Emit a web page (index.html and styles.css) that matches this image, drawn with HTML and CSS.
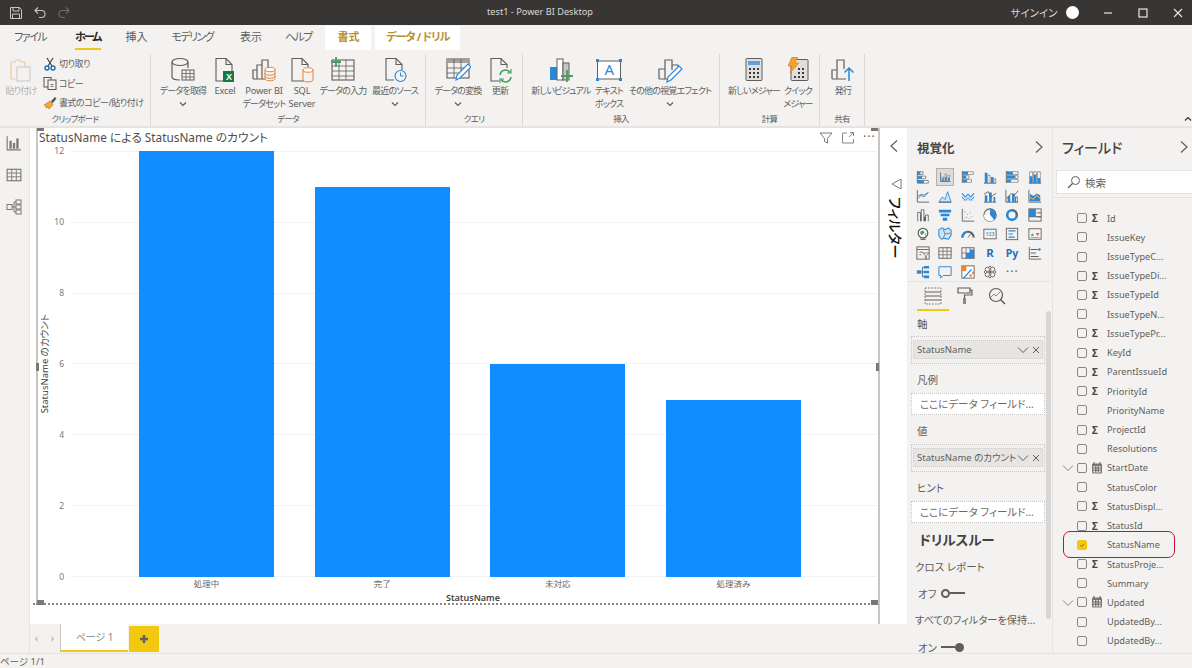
FILE: index.html
```html
<!DOCTYPE html>
<html lang="ja">
<head>
<meta charset="utf-8">
<title>test1 - Power BI Desktop</title>
<link rel="stylesheet" href="styles.css">
</head>
<body>
<svg class="defs" width="0" height="0" aria-hidden="true">
  <symbol id="chev-r" viewBox="0 0 10 14"><path d="M2 1.5 8 7l-6 5.5" fill="none" stroke="currentColor" stroke-width="1.2"/></symbol>
  <symbol id="chev-l" viewBox="0 0 10 14"><path d="M8 1.5 2 7l6 5.5" fill="none" stroke="currentColor" stroke-width="1.2"/></symbol>
  <symbol id="chev-d" viewBox="0 0 8 6"><path d="M1 1.5 4 4.5l3-3" fill="none" stroke="currentColor" stroke-width="1.2"/></symbol>
  <symbol id="chev-dl" viewBox="0 0 12 8"><path d="M1 1.5 6 6.5l5-5" fill="none" stroke="currentColor" stroke-width="1"/></symbol>
  <symbol id="x-mark" viewBox="0 0 8 8"><path d="M1 1 7 7M7 1 1 7" fill="none" stroke="currentColor" stroke-width="1"/></symbol>
  <symbol id="cal" viewBox="0 0 12 12"><rect x="1" y="1.5" width="10" height="10" rx="1" fill="#7a7876"/><rect x="2.5" y="4" width="7" height="6.5" fill="#f3f2f1"/><path d="M3 0v3M9 0v3M2.5 6h7M2.5 8.2h7M4.8 4v6.5M7.2 4v6.5" stroke="#605e5c" stroke-width="1"/></symbol>
</svg>
<div class="app">

<header class="titlebar">
  <div class="qat">
    <svg class="ti" viewBox="0 0 14 14"><path d="M1.5 1.5h9l2 2v9h-11z" fill="none" stroke="#c8c6c4"/><path d="M4 1.5v3.5h6V1.5M3.5 12.5V8h7v4.5" fill="none" stroke="#c8c6c4"/></svg>
    <svg class="ti" viewBox="0 0 14 14"><path d="M5 1.5 2 4.5l3 3M2.5 4.5h6a3.5 3.5 0 0 1 0 7H6" fill="none" stroke="#c8c6c4" stroke-width="1.1"/></svg>
    <svg class="ti" viewBox="0 0 14 14"><path d="M9 1.5l3 3-3 3M11.5 4.5h-6a3.5 3.5 0 0 0 0 7H8" fill="none" stroke="#6d6b69" stroke-width="1.1"/></svg>
  </div>
  <div class="doc-title">test1 - Power BI Desktop</div>
  <div class="win">
    <span class="signin">サインイン</span>
    <span class="avatar"></span>
    <svg class="wc wc-min" viewBox="0 0 10 10"><path d="M1 5h8" stroke="#e6e6e6" stroke-width="1.2"/></svg>
    <svg class="wc" viewBox="0 0 10 10"><rect x="1" y="1" width="8" height="8" fill="none" stroke="#e6e6e6" stroke-width="1.2"/></svg>
    <svg class="wc" viewBox="0 0 10 10"><path d="M1 1l8 8M9 1 1 9" stroke="#e6e6e6" stroke-width="1.1"/></svg>
  </div>
</header>

<nav class="tabs">
  <span class="tab t-file">ファイル</span>
  <span class="tab t-home">ホーム</span>
  <span class="tab t-ins">挿入</span>
  <span class="tab t-model">モデリング</span>
  <span class="tab t-view">表示</span>
  <span class="tab t-help">ヘルプ</span>
  <span class="tab ctx t-fmt">書式</span>
  <span class="tab ctx t-drill">データ / ドリル</span>
</nav>

<section class="ribbon">
  <div class="group g-clip">
    <div class="btns">
      <div class="btn w-paste disabled">
        <svg class="ri" viewBox="0 0 26 26"><path d="M3 5h4l1-2h4l1 2h4v5" fill="none" stroke="#f0c9a0" stroke-width="1.2"/><path d="M3 5v17h5" fill="none" stroke="#f0c9a0" stroke-width="1.2"/><rect x="9" y="10" width="13" height="14" fill="#f3f2f1" stroke="#c8c6c4"/></svg>
        <span class="lbl">貼り付け</span>
      </div>
      <div class="small">
        <div class="sm"><svg class="si" viewBox="0 0 14 14"><path d="M4 1l5 8M10 1 5 9" stroke="#444" stroke-width="1.2"/><circle cx="4" cy="11" r="2" fill="none" stroke="#1f6fb5" stroke-width="1.4"/><circle cx="10" cy="11" r="2" fill="none" stroke="#1f6fb5" stroke-width="1.4"/></svg><span>切り取り</span></div>
        <div class="sm"><svg class="si" viewBox="0 0 14 14"><rect x="1" y="1.5" width="7" height="9.5" fill="#f3f2f1" stroke="#555"/><rect x="5" y="4" width="8" height="9.5" fill="#f3f2f1" stroke="#555"/><path d="M7.5 8.5h3M7.5 10.5h3" stroke="#777"/></svg><span>コピー</span></div>
        <div class="sm"><svg class="si" viewBox="0 0 14 14"><path d="M1 9l6-4 3 4-4 4-1-2-2 1 0-2z" fill="#f0a83c" stroke="#b8741a" stroke-width=".6"/><path d="M8 5l4-4 1.5 1.5-4 5z" fill="#555"/></svg><span>書式のコピー/貼り付け</span></div>
      </div>
    </div>
    <div class="group-name">クリップボード</div>
  </div>

  <div class="group g-data">
    <div class="btns">
      <div class="btn w48">
        <svg class="ri" viewBox="0 0 26 26"><ellipse cx="10" cy="5" rx="8" ry="3.5" fill="none" stroke="#605e5c" stroke-width="1.2"/><path d="M2 5v15c0 2 4 3 8 3M18 5v6" fill="none" stroke="#605e5c" stroke-width="1.2"/><rect x="12" y="13" width="12" height="10" fill="#f3f2f1" stroke="#605e5c"/><path d="M12 16.5h12M12 20h12M16 13v10M20 13v10" stroke="#605e5c" stroke-width=".8"/></svg>
        <span class="lbl">データを取得</span>
        <svg class="dd"><use href="#chev-d"/></svg>
      </div>
      <div class="btn w36">
        <svg class="ri" viewBox="0 0 26 26"><path d="M4 1.5h10l6 6V24H4z" fill="none" stroke="#605e5c" stroke-width="1.1"/><path d="M14 1.5v6h6" fill="none" stroke="#605e5c" stroke-width="1.1"/><rect x="11" y="14" width="11" height="11" fill="#107c41"/><text x="16.5" y="23" class="svg-x">X</text></svg>
        <span class="lbl en">Excel</span>
      </div>
      <div class="btn w42">
        <svg class="ri" viewBox="0 0 26 26"><path d="M2 22V13h4M6 22V8h5V3h6v8M2 22h12" fill="none" stroke="#605e5c" stroke-width="1.2"/><path d="M11 8v14" stroke="#605e5c" stroke-width="1.2"/><ellipse cx="19" cy="12.5" rx="5" ry="2.2" fill="#fff" stroke="#e8853b"/><path d="M14 12.5v9c0 3 10 3 10 0v-9M14 16c0 3 10 3 10 0M14 19c0 3 10 3 10 0" fill="none" stroke="#e8853b"/></svg>
        <span class="lbl"><span class="en">Power BI</span><br>データセット</span>
      </div>
      <div class="btn w34">
        <svg class="ri" viewBox="0 0 26 26"><path d="M15 24H3V1.5h10l6 6V10" fill="none" stroke="#605e5c" stroke-width="1.1"/><path d="M13 1.5v6h6" fill="none" stroke="#605e5c" stroke-width="1.1"/><ellipse cx="19" cy="13" rx="5" ry="2.2" fill="#fff" stroke="#e8853b"/><path d="M14 13v10c0 2.5 10 2.5 10 0V13" fill="none" stroke="#e8853b"/></svg>
        <span class="lbl en">SQL<br>Server</span>
      </div>
      <div class="btn w48">
        <svg class="ri wide" viewBox="0 0 26 26"><rect x="2" y="3" width="22" height="20" fill="none" stroke="#605e5c" stroke-width="1.1"/><path d="M2 9h22M2 14h22M2 19h22M9 3v20M16 3v20" stroke="#605e5c" stroke-width=".8"/><path d="M6 0v10M1 5h10" stroke="#3fa35c" stroke-width="1.8"/></svg>
        <span class="lbl">データの入力</span>
      </div>
      <div class="btn w56">
        <svg class="ri" viewBox="0 0 26 26"><path d="M12 23H4V1.5h10l6 6V13" fill="none" stroke="#605e5c" stroke-width="1.1"/><path d="M14 1.5v6h6" fill="none" stroke="#605e5c" stroke-width="1.1"/><circle cx="18.500" cy="19" r="5.500" fill="#f3f2f1" stroke="#2b88d8" stroke-width="1.2"/><path d="M18.500 15.500V19h3" fill="none" stroke="#2b88d8"/></svg>
        <span class="lbl">最近のソース</span>
        <svg class="dd"><use href="#chev-d"/></svg>
      </div>
    </div>
    <div class="group-name">データ</div>
  </div>

  <div class="group g-query">
    <div class="btns">
      <div class="btn w48">
        <svg class="ri" viewBox="0 0 26 26"><rect x="2" y="2" width="22" height="19" fill="none" stroke="#605e5c" stroke-width="1.1"/><rect x="2" y="2" width="22" height="4" fill="#a19f9d"/><path d="M2 11h20M2 16h14M9 2v19M16 2v13" stroke="#605e5c" stroke-width=".8"/><path d="M11 23l1-5L23 7l3 3-11 11z" fill="#fff" stroke="#2b88d8" stroke-width="1.2"/></svg>
        <span class="lbl">データの変換</span>
        <svg class="dd"><use href="#chev-d"/></svg>
      </div>
      <div class="btn w36">
        <svg class="ri" viewBox="0 0 26 26"><path d="M12 24H4V1.5h10l6 6V11" fill="none" stroke="#605e5c" stroke-width="1.1"/><path d="M14 1.5v6h6" fill="none" stroke="#605e5c" stroke-width="1.1"/><path d="M13 18a5.500 5.500 0 0 1 10-2.500M24 20a5.500 5.500 0 0 1-10 2.500" fill="none" stroke="#3fa35c" stroke-width="1.6"/><path d="M24 12v4h-4M13 26v-4h4" fill="none" stroke="#3fa35c" stroke-width="1.2"/></svg>
        <span class="lbl">更新</span>
      </div>
    </div>
    <div class="group-name">クエリ</div>
  </div>

  <div class="group g-insert">
    <div class="btns">
      <div class="btn w60">
        <svg class="ri" viewBox="0 0 26 26"><rect x="2" y="10" width="7" height="13" fill="#2b88d8"/><rect x="9" y="2" width="6" height="21" fill="#fff" stroke="#605e5c"/><rect x="15" y="6" width="6" height="17" fill="#c8c6c4" stroke="#605e5c"/><path d="M19 13v12M13 19h12" stroke="#3fa35c" stroke-width="1.8"/></svg>
        <span class="lbl">新しいビジュアル</span>
      </div>
      <div class="btn w36">
        <svg class="ri" viewBox="0 0 26 26"><rect x="1.500" y="4" width="23" height="18" fill="#fff" stroke="#605e5c"/><path d="M0 2h3v3H0zM23 2h3v3h-3zM0 21h3v3H0zM23 21h3v3h-3z" fill="#2b88d8"/><text x="13" y="18" class="svg-a">A</text></svg>
        <span class="lbl">テキスト<br>ボックス</span>
      </div>
      <div class="btn w86">
        <svg class="ri" viewBox="0 0 26 26"><path d="M2 22V12h6v10M8 12V3h7v10M15 8h6v5M2 22h10" fill="none" stroke="#605e5c" stroke-width="1.2"/><path d="M10 25l1-5L22 9l3 3-11 11z" fill="#fff" stroke="#2b88d8" stroke-width="1.2"/></svg>
        <span class="lbl">その他の視覚エフェクト</span>
        <svg class="dd"><use href="#chev-d"/></svg>
      </div>
    </div>
    <div class="group-name">挿入</div>
  </div>

  <div class="group g-calc">
    <div class="btns">
      <div class="btn w52">
        <svg class="ri" viewBox="0 0 26 26"><rect x="5" y="1.500" width="16" height="22" rx="1" fill="#e1dfdd" stroke="#605e5c"/><rect x="7" y="4" width="12" height="4" fill="#5ba4e0"/><path d="M8 11h2v2H8zM12 11h2v2h-2zM16 11h2v2h-2zM8 15h2v2H8zM12 15h2v2h-2zM16 15h2v2h-2zM8 19h2v2H8zM12 19h2v2h-2zM16 19h2v2h-2z" fill="#3b3a39"/></svg>
        <span class="lbl">新しいメジャー</span>
      </div>
      <div class="btn w36">
        <svg class="ri" viewBox="0 0 26 26"><rect x="6" y="2.500" width="17" height="21" rx="1" fill="#e1dfdd" stroke="#605e5c"/><path d="M13 11h2v2h-2zM17 11h2v2h-2zM13 15h2v2h-2zM17 15h2v2h-2zM9 19h2v2H9zM13 19h2v2h-2zM17 19h2v2h-2z" fill="#3b3a39"/><path d="M7 0h6l-3 6h4L5 16l2-7H3z" fill="#f2a32c" stroke="#d9791a" stroke-width=".6"/></svg>
        <span class="lbl">クイック<br>メジャー</span>
      </div>
    </div>
    <div class="group-name">計算</div>
  </div>

  <div class="group g-share">
    <div class="btns">
      <div class="btn w30">
        <svg class="ri" viewBox="0 0 26 26"><path d="M2 22V13h5v9M7 13V3h7v9M2 22h14" fill="none" stroke="#605e5c" stroke-width="1.2"/><path d="M19 24V11M14.500 15.500 19 11l4.500 4.500" fill="none" stroke="#2b88d8" stroke-width="1.5"/></svg>
        <span class="lbl">発行</span>
      </div>
    </div>
    <div class="group-name">共有</div>
  </div>

  <svg class="collapse" viewBox="0 0 8 6"><path d="M1 4.500 4 1.500l3 3" fill="none" stroke="#323130" stroke-width="1.2"/></svg>
</section>

<main class="main">
  <aside class="nav">
    <svg class="ni" viewBox="0 0 14 14"><path d="M1 1v12h12" fill="none" stroke="#7a7876"/><path d="M3 5h2v7H3zM6 7h2v5H6zM9 3h2v9H9z" fill="#7a7876"/></svg>
    <svg class="ni" viewBox="0 0 14 14"><rect x="1" y="2" width="12" height="10" fill="none" stroke="#7a7876"/><path d="M1 5.300h12M1 8.600h12M5 2v10M9 2v10" stroke="#7a7876" stroke-width=".8"/></svg>
    <svg class="ni" viewBox="0 0 16 16"><rect x="1" y="5.500" width="5" height="5" fill="none" stroke="#7a7876"/><rect x="10" y="1" width="5" height="4" fill="none" stroke="#7a7876"/><rect x="10" y="6" width="5" height="4" fill="none" stroke="#7a7876"/><rect x="10" y="11" width="5" height="4" fill="none" stroke="#7a7876"/><path d="M6 8h4M8 3v10M8 3h2M8 13h2" stroke="#7a7876" fill="none"/></svg>
  </aside>

  <div class="center">
    <div class="upper">
      <div class="canvas">
        <div class="visual">
          <span class="handle h-tl"></span><span class="handle h-tr"></span><span class="handle h-bl"></span><span class="handle h-br"></span>
          <span class="handle h-ml"></span><span class="handle h-mr"></span>
          <div class="visual-head">
            <div class="visual-title">StatusName による StatusName のカウント</div>
            <div class="visual-tools">
              <svg class="vt" viewBox="0 0 14 14"><path d="M1 2h12L8.500 7.500V12l-3-1.500v-3z" fill="none" stroke="#7a7876"/></svg>
              <svg class="vt" viewBox="0 0 14 14"><path d="M6 2H1.500v10h11V8M8 6l4.500-4.500M9 1.500h3.500V5" fill="none" stroke="#8a8886"/></svg>
              <span class="more">···</span>
            </div>
          </div>
          <div class="chart">
            <div class="y-title"><span>StatusName のカウント</span></div>
            <div class="y-axis"><span>12</span><span>10</span><span>8</span><span>6</span><span>4</span><span>2</span><span>0</span></div>
            <div class="plot">
              <div class="gridlines"><i></i><i></i><i></i><i></i><i></i><i></i><i></i></div>
              <div class="bars">
                <div class="bar" style="height:100%"></div>
                <div class="bar" style="height:91.67%"></div>
                <div class="bar" style="height:50%"></div>
                <div class="bar" style="height:41.67%"></div>
              </div>
            </div>
          </div>
          <div class="x-axis"><span>処理中</span><span>完了</span><span>未対応</span><span>処理済み</span></div>
          <div class="x-title">StatusName</div>
        </div>
      </div>
      <aside class="filter">
        <svg class="chev"><use href="#chev-l"/></svg>
        <svg class="funnel" viewBox="0 0 12 12"><path d="M11 1v10L2 6z" fill="none" stroke="#7a7876"/></svg>
        <div class="filter-label">フィルター</div>
      </aside>
    </div>
    <div class="tabbar">
      <svg class="pg-nav" viewBox="0 0 6 8"><path d="M4.500 1 1.500 4l3 3z" fill="#c8c6c4"/></svg>
      <svg class="pg-nav" viewBox="0 0 6 8"><path d="M1.500 1 4.500 4l-3 3z" fill="#c8c6c4"/></svg>
      <div class="page-tab">ページ 1</div>
      <div class="page-add"><svg viewBox="0 0 10 10"><path d="M5 1v8M1 5h8" stroke="#605e5c" stroke-width="2.400"/></svg></div>
    </div>
  </div>

  <aside class="viz">
    <div class="pane-head">
      <h2 class="viz-title">視覚化</h2>
      <svg class="chev"><use href="#chev-r"/></svg>
    </div>
    <div class="viz-grid">
      <svg viewBox="0 0 16 16"><path d="M1.500 1v14" stroke="#605e5c"/><path d="M2 2h6v3H2zM2 7h9v3H2zM2 12h12v3H2z" fill="#fff" stroke="#605e5c" stroke-width=".8"/><path d="M2 2h3v3H2zM2 7h5v3H2zM2 12h7v3H2z" fill="#2b88d8"/></svg>
      <svg class="on" viewBox="0 0 16 16"><path d="M2 2v12M2 14h13" stroke="#605e5c" fill="none"/><path d="M4 8h2v6H4zM8 4h2v10H8zM12 6h2v8h-2z" fill="#fff" stroke="#605e5c" stroke-width=".7"/><path d="M4 10h2v4H4zM8 8h2v6H8zM12 9h2v5h-2z" fill="#2b88d8"/></svg>
      <svg viewBox="0 0 16 16"><path d="M1.500 1v14" stroke="#605e5c"/><path d="M2 2h12v3H2zM2 6.500h7v3H2zM2 11h10v3H2z" fill="#fff" stroke="#605e5c" stroke-width=".7"/><path d="M2 2h6v3H2zM2 6.500h4v3H2zM2 11h5v3H2z" fill="#2b88d8"/></svg>
      <svg viewBox="0 0 16 16"><path d="M1 15h14" stroke="#605e5c"/><path d="M2 3h3v12H2zM9 8h3v7H9z" fill="#2b88d8"/><path d="M5.500 6h2.500v9H5.500zM12.500 10h2v5h-2z" fill="#fff" stroke="#605e5c" stroke-width=".7"/></svg>
      <svg viewBox="0 0 16 16"><path d="M1.500 1v14" stroke="#605e5c"/><path d="M2 2h13v3H2zM2 6.500h13v3H2zM2 11h13v3H2z" fill="#fff" stroke="#605e5c" stroke-width=".7"/><path d="M2 2h7v3H2zM2 6.500h10v3H2zM2 11h5v3H2z" fill="#2b88d8"/></svg>
      <svg viewBox="0 0 16 16"><path d="M1 15h14" stroke="#605e5c"/><path d="M2 2h3v13H2zM6.500 2h3v13h-3zM11 2h3v13h-3z" fill="#fff" stroke="#605e5c" stroke-width=".7"/><path d="M2 7h3v8H2zM6.500 5h3v10h-3zM11 9h3v6h-3z" fill="#2b88d8"/></svg>

      <svg viewBox="0 0 16 16"><path d="M1.500 1v14H15" fill="none" stroke="#605e5c"/><path d="M2 11l4-4 3 2 5-5" fill="none" stroke="#605e5c"/><path d="M2 8l4-2 3 1 5-3" fill="none" stroke="#2b88d8"/></svg>
      <svg viewBox="0 0 16 16"><path d="M1 15l4-6 3 3 3-9 4 12z" fill="#cfe4f7" stroke="#2b88d8"/><path d="M1 15h14" stroke="#605e5c"/></svg>
      <svg viewBox="0 0 16 16"><path d="M1 5l4 4 3-3 3 3 4-4v9H1z" fill="#cfe4f7"/><path d="M1 5l4 4 3-3 3 3 4-4" fill="none" stroke="#2b88d8" stroke-width="1.2"/><path d="M1 9l4 4 3-3 3 3 4-4" fill="none" stroke="#2b88d8"/></svg>
      <svg viewBox="0 0 16 16"><path d="M1 15h14" stroke="#605e5c"/><path d="M2 7h3v8H2zM7 4h3v11H7zM12 9h2v6h-2z" fill="#2b88d8"/><path d="M1 6l5-3 3 6 6-4" fill="none" stroke="#605e5c"/></svg>
      <svg viewBox="0 0 16 16"><path d="M1 1v14h14" fill="none" stroke="#605e5c"/><path d="M3 8h3v7H3zM8 5h3v10H8z" fill="#2b88d8"/><path d="M12 9h2v6h-2z" fill="#fff" stroke="#605e5c"/><path d="M2 11l5-6 3 3 5-6" fill="none" stroke="#605e5c"/></svg>
      <svg viewBox="0 0 16 16"><path d="M1 1v14h14" fill="none" stroke="#605e5c"/><path d="M2 5l4 3 4-3 4 2v7H2z" fill="#2b88d8"/><path d="M2 9l4 3 4-5 4 4" fill="none" stroke="#e8a33d" stroke-width="1.4"/></svg>

      <svg viewBox="0 0 16 16"><path d="M2 15V5h3v10M6 15V2h3v13M11 15V8h3v7" fill="#fff" stroke="#605e5c"/><path d="M5 8h1v7H5zM9 10h2v5H9z" fill="#605e5c"/></svg>
      <svg viewBox="0 0 16 16"><path d="M1 2h14v3H1zM3 6.500h10v3H3zM5.500 11h5v3.500h-5z" fill="#2b88d8"/></svg>
      <svg viewBox="0 0 16 16"><path d="M1.500 1v14H15" fill="none" stroke="#605e5c"/><path d="M4 11h1v1H4zM7 7h1v1H7zM6 10h1v1H6zM10 5h1v1h-1zM12 9h1v1h-1zM9 11h1v1H9zM4 4h1v1H4z" fill="#2b88d8"/></svg>
      <svg viewBox="0 0 16 16"><circle cx="8" cy="8" r="7" fill="none" stroke="#605e5c" stroke-width="1.2"/><path d="M8 8V1a7 7 0 0 1 4.500 12.400z" fill="#2b88d8"/><path d="M8 8 12.500 13.400A7 7 0 0 1 1 8z" fill="#fff"/></svg>
      <svg viewBox="0 0 16 16"><circle cx="8" cy="8" r="5.500" fill="none" stroke="#2b88d8" stroke-width="3"/><path d="M8 2.500a5.500 5.500 0 0 1 5.500 5.500" fill="none" stroke="#605e5c" stroke-width="1.500"/></svg>
      <svg viewBox="0 0 16 16"><rect x="1" y="1" width="14" height="14" fill="none" stroke="#605e5c"/><path d="M1 1h8v9H1z" fill="#2b88d8"/><path d="M10 5.500h5M10 10h5M1 10h14" stroke="#605e5c"/></svg>

      <svg viewBox="0 0 16 16"><circle cx="8" cy="7" r="5.500" fill="#fff" stroke="#605e5c" stroke-width="1.400"/><path d="M5 5l3-1 2 2-3 3-2-1zM10 8l2-1-1 3z" fill="#3fa35c"/><path d="M5 14h6" stroke="#605e5c" stroke-width="1.400"/></svg>
      <svg viewBox="0 0 16 16"><path d="M1 3l4-2 3 2 4-2 3 3v5l-3 5-5-1-3 1-3-4z" fill="#cfe4f7" stroke="#2b88d8" stroke-width="1.200"/><path d="M6 3l2 5-2 5M8 8l6-1" fill="none" stroke="#605e5c" stroke-width=".8"/></svg>
      <svg viewBox="0 0 16 16"><path d="M1.500 12a6.500 6.500 0 0 1 13 0" fill="none" stroke="#605e5c" stroke-width="2.400"/><path d="M1.500 12a6.500 6.500 0 0 1 6.500-6.500" fill="none" stroke="#2b88d8" stroke-width="2.400"/><path d="M8 12l3-4" stroke="#605e5c"/></svg>
      <svg viewBox="0 0 16 16"><rect x="1" y="2.500" width="14" height="11" fill="none" stroke="#605e5c"/><text x="8" y="10.500" class="svg-n">123</text></svg>
      <svg viewBox="0 0 16 16"><rect x="1.500" y="1.500" width="13" height="13" fill="none" stroke="#605e5c"/><path d="M4 4.500h8M4 8h5M4 11.500h7" stroke="#2b88d8" stroke-width="1.300"/></svg>
      <svg viewBox="0 0 16 16"><rect x="1" y="2" width="14" height="12" fill="none" stroke="#605e5c"/><path d="M3 10l2-3 2 3z" fill="#3fa35c"/><path d="M9 7h4l-2 3z" fill="#d13438"/><path d="M3 12h10" stroke="#a19f9d"/></svg>

      <svg viewBox="0 0 16 16"><rect x="1" y="1" width="14" height="14" fill="none" stroke="#605e5c"/><path d="M1 4h14M4 7h4M4 10h2" stroke="#605e5c"/><path d="M8 8h7l-3 3v4l-1.500-1v-3z" fill="#f3f2f1" stroke="#605e5c" stroke-width=".8"/></svg>
      <svg viewBox="0 0 16 16"><rect x="1" y="2" width="14" height="12" fill="none" stroke="#605e5c"/><path d="M1 6h14M1 10h14M5.700 2v12M10.300 2v12" stroke="#605e5c" stroke-width=".8"/></svg>
      <svg viewBox="0 0 16 16"><rect x="1" y="2" width="14" height="12" fill="none" stroke="#605e5c"/><path d="M1 8h14M5.700 2v12M10.300 2v12" stroke="#605e5c" stroke-width=".8"/><path d="M5.700 8h4.600v6H5.700zM10.300 4h4.700v10h-4.700z" fill="#2b88d8"/></svg>
      <svg class="txt" viewBox="0 0 16 16"><text x="8" y="13" class="svg-r">R</text></svg>
      <svg class="txt" viewBox="0 0 16 16"><text x="8" y="13" class="svg-py">Py</text></svg>
      <svg viewBox="0 0 16 16"><path d="M1.500 1v14H15" fill="none" stroke="#605e5c"/><path d="M3 4h8M3 8h6M3 12h9" stroke="#605e5c" stroke-width="1.400"/><circle cx="13" cy="4" r="1.500" fill="#2b88d8"/></svg>

      <svg viewBox="0 0 16 16"><path d="M1 6h5v4H1z" fill="#2b88d8"/><path d="M9 1h6v3H9zM9 6.500h6v3H9zM9 12h6v3H9z" fill="#2b88d8"/><path d="M6 8h3M7.500 2.500v11M7.500 2.500H9M7.500 13.500H9" fill="none" stroke="#605e5c"/></svg>
      <svg viewBox="0 0 16 16"><path d="M1 2h14v10H6l-3 3v-3H1z" fill="none" stroke="#2b88d8" stroke-width="1.100"/></svg>
      <svg viewBox="0 0 16 16"><rect x="1" y="1" width="14" height="14" fill="#fff" stroke="#605e5c"/><path d="M1 1h5v6H1z" fill="#e8853b"/><path d="M3 15l9-10" stroke="#2b88d8" stroke-width="1.600"/><circle cx="11" cy="12" r="1.500" fill="#e8853b"/><circle cx="14" cy="9" r="1.500" fill="#e8853b"/></svg>
      <svg viewBox="0 0 16 16"><path d="M8 1l7 7-7 7-7-7z" fill="none" stroke="#605e5c" stroke-width="1.100"/><path d="M4.500 4.500l7 7M11.500 4.500l-7 7" stroke="#605e5c"/><circle cx="5" cy="5" r="2.500" fill="#f3f2f1" stroke="#605e5c"/><circle cx="11" cy="5" r="2.500" fill="#f3f2f1" stroke="#605e5c"/><circle cx="5" cy="11" r="2.500" fill="#f3f2f1" stroke="#605e5c"/><circle cx="11" cy="11" r="2.500" fill="#f3f2f1" stroke="#605e5c"/></svg>
      <span class="viz-more">···</span>
    </div>
    <div class="viz-tabs">
      <div class="vtab active"><svg viewBox="0 0 18 18"><path d="M1 1h16v16H1z" fill="none" stroke="#8a8886" stroke-dasharray="2 1"/><path d="M1 5h16M1 9h16M1 13h16" stroke="#605e5c"/></svg></div>
      <div class="vtab"><svg viewBox="0 0 18 18"><path d="M2 1h12v5H2zM14 3h2v5H8.500v3" fill="none" stroke="#605e5c" stroke-width="1.200"/><rect x="7" y="11" width="3" height="6" fill="#8a8886"/></svg></div>
      <div class="vtab"><svg viewBox="0 0 18 18"><circle cx="8" cy="8" r="6.500" fill="none" stroke="#605e5c" stroke-width="1.200"/><path d="M3 10l3-3 2 2 4-4" fill="none" stroke="#8a8886"/><path d="M12.500 12.500 17 17" stroke="#605e5c" stroke-width="1.600"/></svg></div>
    </div>
    <div class="wells">
      <span class="thumb"></span>
      <div class="well-label l-first">軸</div>
      <div class="well tall"><div class="chip"><span>StatusName</span><svg class="c-d"><use href="#chev-dl"/></svg><svg class="c-x"><use href="#x-mark"/></svg></div></div>
      <div class="well-label">凡例</div>
      <div class="well empty">ここにデータ フィールド...</div>
      <div class="well-label">値</div>
      <div class="well tall"><div class="chip"><span>StatusName のカウント</span><svg class="c-d"><use href="#chev-dl"/></svg><svg class="c-x"><use href="#x-mark"/></svg></div></div>
      <div class="well-label">ヒント</div>
      <div class="well empty">ここにデータ フィールド...</div>
      <h3 class="drill">ドリルスルー</h3>
      <div class="opt">クロス レポート</div>
      <div class="toggle"><span>オフ</span><i class="knob off"></i><i class="line"></i></div>
      <div class="opt keep">すべてのフィルターを保持...</div>
      <div class="toggle"><span>オン</span><i class="line short"></i><i class="knob full"></i></div>
    </div>
  </aside>

  <aside class="fields">
    <div class="pane-head">
      <h2 class="fields-title">フィールド</h2>
      <svg class="chev"><use href="#chev-r"/></svg>
    </div>
    <div class="search">
      <svg viewBox="0 0 14 14"><circle cx="8.500" cy="5.500" r="4" fill="none" stroke="#605e5c"/><path d="M5.500 8.500 1 13" stroke="#605e5c" stroke-width="1.200"/></svg>
      <span>検索</span>
    </div>
    <ul class="list">
      <li class="row"><b class="cb"></b><em class="sig">Σ</em><span>Id</span></li>
      <li class="row"><b class="cb"></b><em class="sig"></em><span>IssueKey</span></li>
      <li class="row"><b class="cb"></b><em class="sig"></em><span>IssueTypeC...</span></li>
      <li class="row"><b class="cb"></b><em class="sig">Σ</em><span>IssueTypeDi...</span></li>
      <li class="row"><b class="cb"></b><em class="sig">Σ</em><span>IssueTypeId</span></li>
      <li class="row"><b class="cb"></b><em class="sig"></em><span>IssueTypeN...</span></li>
      <li class="row"><b class="cb"></b><em class="sig">Σ</em><span>IssueTypePr...</span></li>
      <li class="row"><b class="cb"></b><em class="sig">Σ</em><span>KeyId</span></li>
      <li class="row"><b class="cb"></b><em class="sig">Σ</em><span>ParentIssueId</span></li>
      <li class="row"><b class="cb"></b><em class="sig">Σ</em><span>PriorityId</span></li>
      <li class="row"><b class="cb"></b><em class="sig"></em><span>PriorityName</span></li>
      <li class="row"><b class="cb"></b><em class="sig">Σ</em><span>ProjectId</span></li>
      <li class="row"><b class="cb"></b><em class="sig"></em><span>Resolutions</span></li>
      <li class="row"><svg class="exp"><use href="#chev-dl"/></svg><b class="cb"></b><em class="sig"><svg class="cal"><use href="#cal"/></svg></em><span>StartDate</span></li>
      <li class="row"><b class="cb"></b><em class="sig"></em><span>StatusColor</span></li>
      <li class="row"><b class="cb"></b><em class="sig">Σ</em><span>StatusDispl...</span></li>
      <li class="row"><b class="cb"></b><em class="sig">Σ</em><span>StatusId</span></li>
      <li class="row picked"><b class="cb checked"><svg viewBox="0 0 10 10"><path d="M2.500 5 4.500 7 7.500 3.500" fill="none" stroke="#605e5c"/></svg></b><em class="sig"></em><span>StatusName</span></li>
      <li class="row"><b class="cb"></b><em class="sig">Σ</em><span>StatusProje...</span></li>
      <li class="row"><b class="cb"></b><em class="sig"></em><span>Summary</span></li>
      <li class="row"><svg class="exp"><use href="#chev-dl"/></svg><b class="cb"></b><em class="sig"><svg class="cal"><use href="#cal"/></svg></em><span>Updated</span></li>
      <li class="row"><b class="cb"></b><em class="sig"></em><span>UpdatedBy...</span></li>
      <li class="row"><b class="cb"></b><em class="sig"></em><span>UpdatedBy...</span></li>
    </ul>
  </aside>
</main>

<footer class="statusbar">ページ 1/1</footer>
</div>
</body>
</html>
```

FILE: styles.css
```css
* { box-sizing: border-box; }
html, body { margin: 0; height: 100%; overflow: hidden; }
body {
  font-family: "Noto Sans", "Noto Sans CJK JP", sans-serif;
  font-feature-settings: "palt";
  color: #605e5c;
  background: #f3f2f1;
}
.defs { position: absolute; }
.app { width: 1192px; height: 668px; display: flex; flex-direction: column; overflow: hidden; }
h2, h3, ul { margin: 0; padding: 0; }
em, i { font-style: normal; }

/* title bar */
.titlebar { height: 25px; flex: none; background: #383634; display: flex; align-items: center; color: #d8d6d4; position: relative; }
.qat { display: flex; gap: 10px; padding-left: 9px; }
.ti { width: 14px; height: 14px; display: block; }
.doc-title { position: absolute; left: 487px; top: 4px; font-size: 9.200px; line-height: 16px; white-space: nowrap; }
.win { margin-left: auto; display: flex; align-items: center; }
.signin { font-size: 10.500px; margin-right: 8px; }
.avatar { width: 13px; height: 13px; border-radius: 50%; background: #fff; margin-right: 24.500px; }
.wc { width: 10px; height: 10px; margin-right: 25px; display: block; }
.wc:last-child { margin-right: 9px; }

/* tabs */
.tabs { height: 25px; flex: none; background: #f3f2f1; display: flex; align-items: flex-end; position: relative; font-size: 11px; }
.tab { height: 24px; line-height: 22px; white-space: nowrap; color: #605e5c; }
.t-file { margin-left: 14px; letter-spacing: -1.500px; }
.t-home { margin-left: 29px; color: #252423; font-weight: 700; position: relative; letter-spacing: -2px; }
.t-home::after { content: ""; position: absolute; left: 0; right: 0; bottom: 0; height: 2px; background: #f2c811; }
.t-ins { margin-left: 25px; }
.t-model { margin-left: 24px; letter-spacing: -1.600px; }
.t-view { margin-left: 27px; }
.t-help { margin-left: 23px; letter-spacing: -1.700px; }
.ctx { background: #fff; color: #b8902a; font-weight: 700; text-align: center; }
.t-fmt { margin-left: 14px; width: 46px; }
.t-drill { margin-left: 4px; width: 85px; letter-spacing: -.900px; }

/* ribbon */
.ribbon { height: 76px; flex: none; display: flex; background: #f3f2f1; position: relative; font-size: 9px; line-height: 13px; letter-spacing: -.800px; }
.group { display: flex; flex-direction: column; border-right: 1px solid #dcdad8; height: 72px; padding-left: 8px; margin-top: 4px; }
.g-clip { width: 151px; padding-left: 5px; }
.g-data { width: 275px; }
.g-query { width: 97px; }
.g-insert { width: 197px; }
.g-calc { width: 100px; }
.g-share { width: 45px; }
.btns { display: flex; flex: 1; }
.btn { display: flex; flex-direction: column; align-items: center; text-align: center; white-space: nowrap; padding-top: 3px; }
.w-paste { width: 32px; }
.w30 { width: 30px; } .w34 { width: 34px; } .w36 { width: 36px; } .w42 { width: 42px; }
.w48 { width: 48px; } .w52 { width: 52px; } .w56 { width: 56px; } .w60 { width: 60px; } .w86 { width: 86px; }
.ri { width: 26px; height: 26px; display: block; margin-bottom: 1px; flex: none; }
.lbl { display: block; }
.en { font-size: 9.300px; letter-spacing: -.200px; }
.disabled .lbl { color: #b3b0ad; }
.dd { width: 8px; height: 6px; margin-top: 4px; color: #605e5c; }
.small { margin-left: 6px; display: flex; flex-direction: column; padding-top: 3px; gap: 6px; letter-spacing: -.500px; }
.sm { display: flex; align-items: center; height: 13.500px; white-space: nowrap; }
.si { width: 14px; height: 14px; margin-right: 2px; flex: none; }
.group-name { text-align: center; height: 14px; line-height: 14px; font-size: 8.500px; flex: none; margin-left: -8px; }
.g-clip .group-name { margin-left: -5px; }
.collapse { position: absolute; right: 0; bottom: 4px; width: 8px; height: 6px; }

/* main */
.main { flex: 1; min-height: 0; display: flex; border-top: 2px solid #e6e4e2; }
.nav { width: 29px; flex: none; display: flex; flex-direction: column; align-items: center; gap: 16px; padding-top: 7px; padding-right: 1px; }
.ni { width: 16px; height: 16px; display: block; }
.center { width: 878px; flex: none; display: flex; flex-direction: column; }
.upper { flex: 1; min-height: 0; display: flex; }

/* canvas */
.canvas { width: 851px; flex: none; background: #fff; padding-left: 6px; border-right: 2px solid #c8c6c4; border-left: 1px solid #ebe9e7; }
.visual { height: 477px; position: relative; border-left: 2px solid #c8c6c4; display: flex; flex-direction: column; }
.visual::after { content: ""; position: absolute; left: -5px; right: 0; bottom: 0; border-bottom: 2px dotted #8a8886; }
.handle { position: absolute; background: #7a7876; z-index: 3; }
.h-tl { left: -1px; top: 0; width: 7px; height: 3px; }
.h-tr { right: 0; top: 0; width: 7px; height: 3px; }
.h-bl { left: -1px; bottom: 0; width: 7px; height: 5px; }
.h-br { right: 0; bottom: 0; width: 7px; height: 5px; }
.h-ml { left: -2px; top: 235px; width: 3px; height: 8px; }
.h-mr { right: -1px; top: 235px; width: 3px; height: 8px; }
.visual-head { height: 23px; flex: none; display: flex; justify-content: space-between; padding-left: 1px; }
.visual-title { font-size: 11.800px; line-height: 18px; color: #4f4d4b; white-space: nowrap; }
.visual-tools { display: flex; align-items: flex-start; padding-top: 3px; padding-right: 1px; }
.vt { width: 14px; height: 14px; margin-right: 8px; display: block; }
.more { font-size: 12px; line-height: 12px; width: 14px; color: #605e5c; letter-spacing: 1px; }
.chart { height: 426px; flex: none; display: flex; }
.y-title { width: 12px; flex: none; display: flex; align-items: center; justify-content: center; }
.y-title span { writing-mode: vertical-rl; text-orientation: sideways; transform: rotate(180deg); font-size: 9.500px; line-height: 12px; color: #444; white-space: nowrap; margin-left: 2px; }
.y-axis { width: 12px; margin-left: 2px; margin-top: -6px; margin-bottom: -6px; flex: none; display: flex; flex-direction: column; justify-content: space-between; align-items: flex-end; font-size: 8.500px; line-height: 12px; color: #777; }
.plot { flex: 1; position: relative; margin-left: 6px; margin-right: 1px; }
.gridlines { position: absolute; inset: 0; display: flex; flex-direction: column; justify-content: space-between; }
.gridlines i { display: block; height: 0; border-top: 1px dotted #e6e6e6; }
.bars { position: relative; height: 100%; display: flex; align-items: flex-end; padding-left: 69px; gap: 40.670px; }
.bar { width: 135px; background: #118dff; }
.x-axis { height: 14px; flex: none; display: flex; gap: 40.670px; padding-left: 101px; font-size: 8.500px; line-height: 14px; color: #666; }
.x-axis span { width: 135px; text-align: center; }
.x-title { padding-left: 30px; text-align: center; font-size: 9px; font-weight: 600; line-height: 14px; color: #444; }

/* filter */
.filter { width: 27px; flex: none; background: #fff; display: flex; flex-direction: column; align-items: center; padding-top: 11px; }
.chev { width: 10px; height: 14px; color: #605e5c; display: block; flex: none; }
.funnel { width: 12px; height: 12px; margin-top: 25px; margin-left: 4px; }
.filter-label { writing-mode: vertical-rl; text-orientation: sideways; font-size: 14px; line-height: 16px; font-weight: 500; color: #111; margin-top: 7px; margin-left: 3px; }

/* page tabs */
.tabbar { height: 29px; flex: none; display: flex; align-items: flex-start; border-left: 1px solid #e6e4e2; padding-left: 1px; }
.pg-nav { width: 6px; height: 8px; margin-top: 11px; margin-left: 2px; margin-right: 9px; }
.pg-nav + .pg-nav { margin-right: 4px; }
.page-tab { width: 68px; height: 28px; background: #fff; border-left: 1px solid #c8c6c4; border-bottom: 2px solid #f2c811; font-size: 10px; line-height: 26px; text-align: center; color: #8a8886; }
.page-add { width: 30px; height: 26px; margin-left: 1px; margin-top: 2px; background: #f2c811; display: flex; align-items: center; justify-content: center; }
.page-add svg { width: 10px; height: 10px; }

/* panes */
.viz { width: 145px; flex: none; display: flex; flex-direction: column; }
.pane-head { height: 38px; flex: none; display: flex; align-items: center; justify-content: space-between; }
.viz .pane-head { padding: 0 8px 0 10px; }
.viz-title { font-size: 12.500px; font-weight: 700; color: #444; }
.viz-grid { height: 116px; flex: none; padding-left: 5px; padding-top: 1px; display: grid; grid-template-columns: repeat(6, 22.300px); grid-auto-rows: 19.100px; justify-items: center; align-items: center; border-bottom: 1px solid #e6e4e2; }
.viz-grid svg { width: 14px; height: 14px; display: block; }
.viz-grid svg.on { width: 18px; height: 18px; padding: 2px; background: #dedcda; border: 1px solid #b3b0ad; }
.viz-grid svg.txt { overflow: visible; }
.viz-more { font-size: 12px; line-height: 12px; letter-spacing: 1px; }
.svg-r { font: 700 13px "Noto Sans", sans-serif; fill: #1f6fb5; text-anchor: middle; }
.svg-py { font: 700 12px "Noto Sans", sans-serif; fill: #1f6fb5; text-anchor: middle; }
.svg-n { font: 700 6px "Noto Sans", sans-serif; fill: #5ba4e0; text-anchor: middle; }
.svg-x { font: 700 9px "Liberation Sans", sans-serif; fill: #fff; text-anchor: middle; }
.svg-a { font: 400 15px "Noto Sans", sans-serif; fill: #2b88d8; text-anchor: middle; }
.viz-tabs { height: 29px; flex: none; display: flex; padding-left: 10px; }
.vtab { width: 32px; display: flex; justify-content: center; padding-top: 5px; }
.vtab svg { width: 18px; height: 18px; display: block; }
.vtab.active { border-bottom: 2px solid #f2c811; height: 29px; }
.wells { flex: 1; min-height: 0; position: relative; overflow: hidden; padding-left: 4px; font-size: 10.500px; }
.thumb { position: absolute; left: 139px; top: 0; width: 5px; height: 308px; background: #d8d6d4; border-radius: 3px; }
.well-label { height: 29px; padding-left: 6px; padding-top: 9px; line-height: 14px; }
.l-first { height: 25px; padding-top: 6px; }
.well { width: 134px; border: 1px dotted #c8c6c4; }
.well.tall { height: 28px; padding: 3px 1px; }
.well.empty { height: 22px; background: #fff; padding-left: 8px; line-height: 20px; white-space: nowrap; color: #6b6967; }
.chip { height: 19px; background: #e6e5e3; border: 1px solid #dcdad8; display: flex; align-items: center; padding-left: 3px; line-height: 17px; font-size: 9.500px; white-space: nowrap; position: relative; }
.chip span { flex: 1; overflow: visible; min-width: 0; }
.c-d { width: 12px; height: 8px; color: #605e5c; flex: none; margin-right: 3px; }
.c-x { width: 8px; height: 8px; color: #605e5c; flex: none; margin-right: 2px; }
.drill { font-size: 13.500px; font-weight: 700; color: #444; height: 35px; line-height: 35px; padding-left: 8px; }
.opt { height: 18px; line-height: 18px; white-space: nowrap; padding-left: 4px; }
.keep { height: 20px; line-height: 20px; font-size: 10.200px; }
.toggle { height: 34px; display: flex; align-items: center; padding-left: 7px; white-space: nowrap; }
.toggle span { width: 23px; }
.knob { width: 9px; height: 9px; border-radius: 50%; flex: none; }
.knob.off { border: 2px solid #605e5c; }
.knob.full { background: #605e5c; }
.line { width: 15px; height: 1.500px; background: #605e5c; }
.line.short { width: 14px; }

.fields { width: 140px; flex: none; border-left: 1px solid #e6e4e2; display: flex; flex-direction: column; }
.fields .pane-head { padding: 0 3px 0 9px; }
.fields-title { font-size: 14px; font-weight: 500; color: #444; }
.search { height: 24px; margin-left: 3px; margin-top: 4px; flex: none; background: #fff; border: 1px solid #e6e4e2; border-right: 0; display: flex; align-items: center; padding-left: 10px; font-size: 10.500px; }
.search svg { width: 14px; height: 14px; margin-right: 4px; }
.list { list-style: none; flex: 1; min-height: 0; overflow: hidden; margin-top: 3px; border-top: 1px solid #e6e4e2; padding-top: 10.500px; font-size: 9.200px; }
.row { height: 19.230px; display: flex; align-items: center; padding-left: 24px; position: relative; white-space: nowrap; color: #605e5c; }
.exp { position: absolute; left: 9px; top: 6px; width: 12px; height: 8px; color: #8a8886; }
.cb { width: 10px; height: 10px; flex: none; display: block; border: 1px solid #8a8886; border-radius: 2px; background: #f3f2f1; }
.cb.checked { background: #f2c811; border-color: #f2c811; }
.cb.checked svg { display: block; width: 8px; height: 8px; }
.sig { width: 20px; flex: none; font-size: 10px; font-weight: 700; color: #444; padding-left: 5px; line-height: 12px; display: block; }
.cal { width: 12px; height: 12px; display: block; margin-left: -1px; }
.picked { z-index: 1; }
.picked::before { content: ""; position: absolute; z-index: -1; left: 10px; right: 17px; top: -4px; bottom: -4px; background: #f3f2f1; border: 1px solid #c8102e; border-radius: 7px; }

.statusbar { height: 15px; flex: none; font-size: 9.500px; line-height: 15px; border-top: 1px solid #e6e4e2; white-space: nowrap; }
```
